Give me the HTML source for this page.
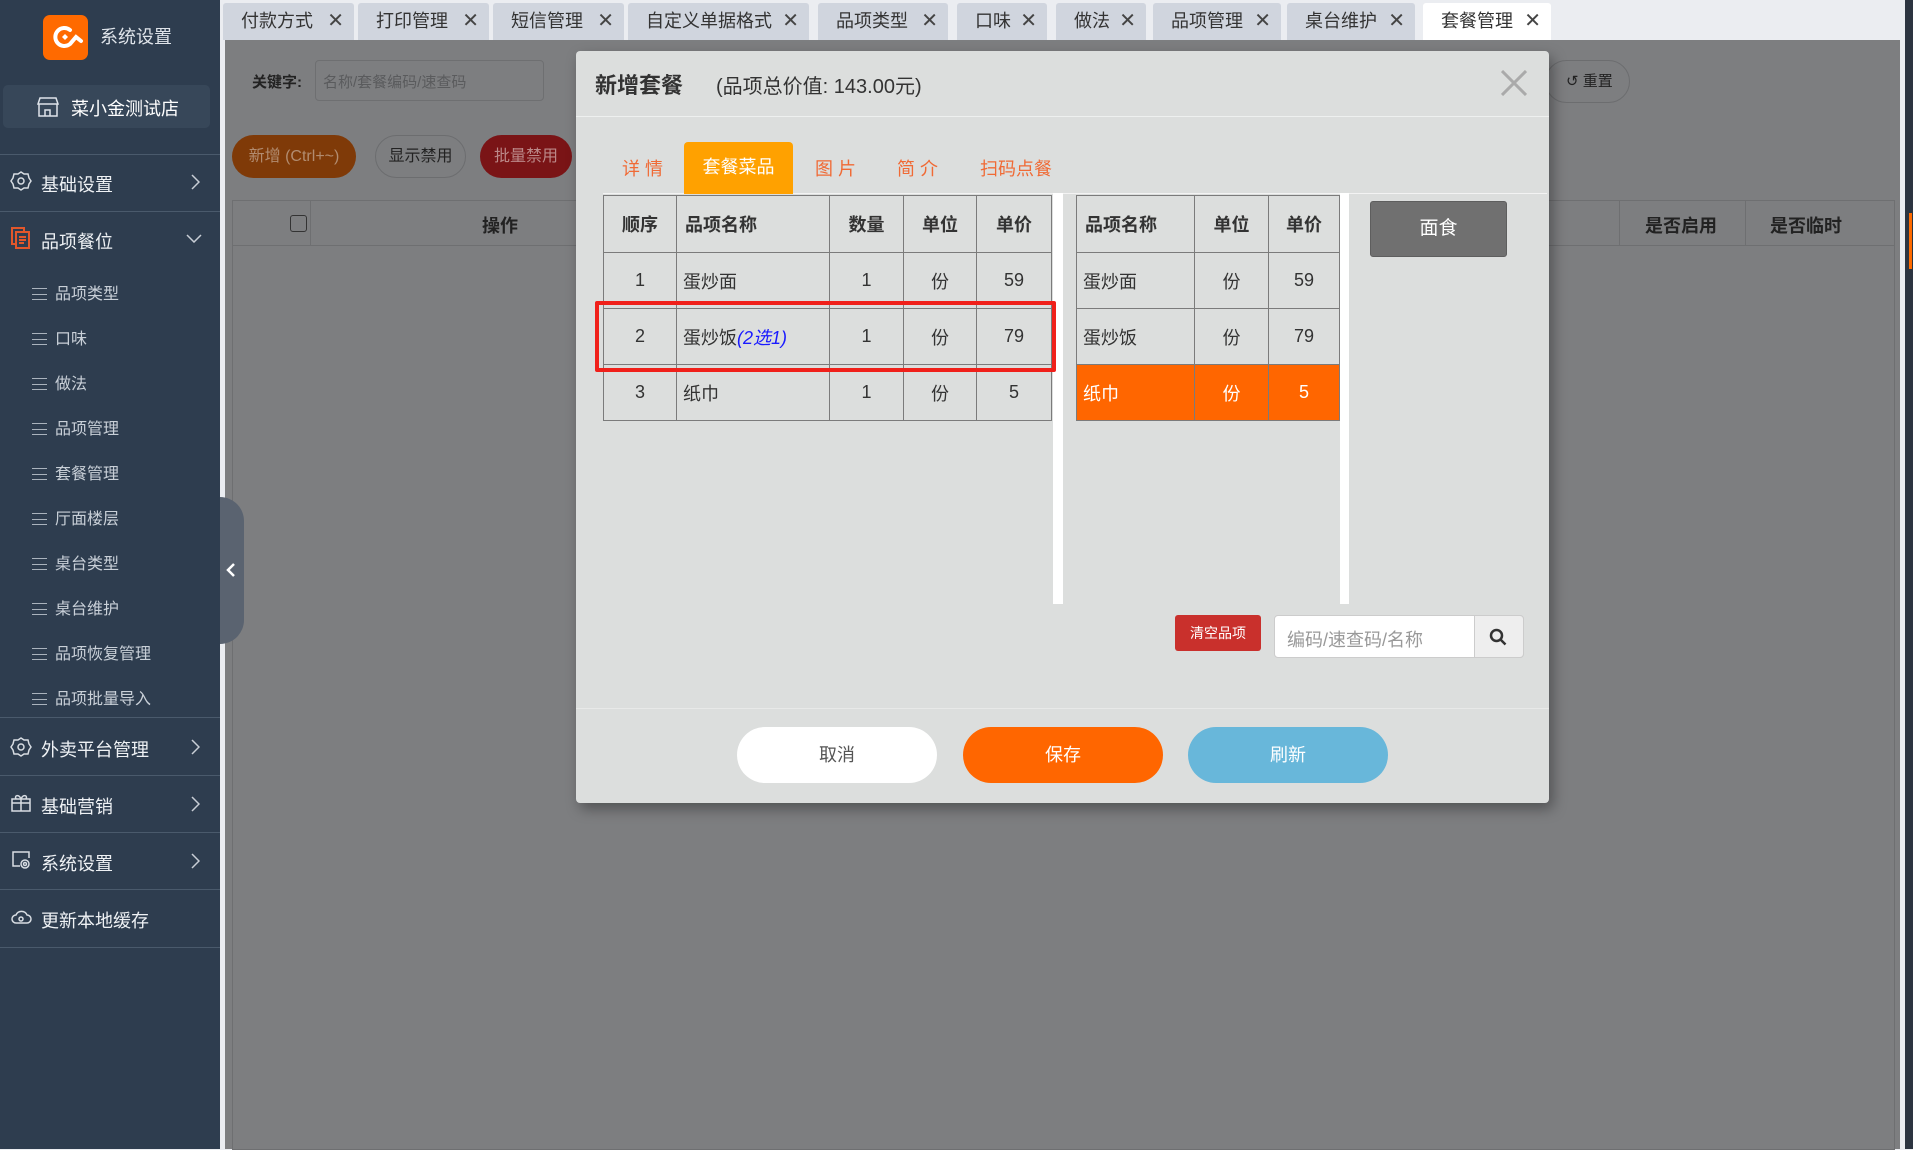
<!DOCTYPE html>
<html><head><meta charset="utf-8"><style>
*{margin:0;padding:0;box-sizing:border-box}
body{width:1913px;height:1149px;overflow:hidden;position:relative;background:#ebedf1;font-family:"Liberation Sans","Noto Sans CJK SC",sans-serif;}
.a{position:absolute}
.sb{left:0;top:0;width:220px;height:1149px;background:#2e3d4f;color:#e8ecf0}
.sep{position:absolute;left:0;width:220px;height:1px;background:#4a5a6c}
.mi{position:absolute;left:0;width:220px;font-size:18px;color:#eef1f4}
.mi .ic{position:absolute;left:10px;top:-2px;width:22px;height:22px}
.mi .t{position:absolute;left:41px;top:-1px}
.mi .ar{position:absolute;left:190px;top:2px;width:10px;height:16px}
.sub{position:absolute;left:32px;font-size:16px;color:#c9d0d8}
.sub b{display:inline-block;width:15px;height:12px;border-top:1px solid #aab3bd;border-bottom:1px solid #aab3bd;position:relative;margin-right:8px;top:1px}
.sub b:after{content:"";position:absolute;left:0;right:0;top:5px;border-top:1px solid #aab3bd}
.tab{position:absolute;top:3px;height:37px;background:#d0d5de;border-radius:3px 3px 0 0;font-size:18px;color:#333;padding-left:18px;line-height:36px}
.tab i{font-style:normal;position:absolute;right:10px;top:0;font-size:20px;color:#444}
.ov{left:225px;top:40px;width:1675px;height:1109px;background:#7d7e80}
table{border-collapse:collapse}
td{border:1px solid #7b7b7b;font-size:18px;color:#333;text-align:center;height:56px}
.lt td:nth-child(2){text-align:left;padding-left:6px}
.rt td:first-child{text-align:left;padding-left:6px}
th{border:1px solid #7b7b7b;font-size:18px;color:#333;height:57px;font-weight:bold}
.btn{position:absolute;top:727px;width:200px;height:56px;border-radius:28px;text-align:center;line-height:56px;font-size:18px}
</style></head><body>
<div class="a sb">
 <div class="a" style="left:43px;top:15px;width:45px;height:45px;background:#ff6a00;border-radius:7px">
  <svg width="45" height="45" viewBox="0 0 45 45"><path d="M27 15 A9 9 0 1 0 27 29 L33 22 L38 26" fill="none" stroke="#fff" stroke-width="4" stroke-linecap="round"/><path d="M19 22 l3-3 3 3-3 3z" fill="#fff"/></svg>
 </div>
 <div class="a" style="left:100px;top:23px;font-size:18px;color:#dfe4ea">系统设置</div>
 <div class="a" style="left:3px;top:85px;width:207px;height:43px;background:#374759;border-radius:5px"></div>
 <svg class="a" style="left:37px;top:96px" width="22" height="22" viewBox="0 0 22 22" fill="none" stroke="#dfe4ea" stroke-width="1.5"><path d="M3 2h16l2 6H1z M2 8v12h18V8 M8 20v-6h5v6"/></svg>
 <div class="a" style="left:71px;top:95px;font-size:18px;color:#fff">菜小金测试店</div>
 <div class="sep" style="top:154px"></div>
 <div class="mi" style="top:172px"><svg class="ic" viewBox="0 0 22 22" fill="none" stroke="#d8dde3" stroke-width="1.5"><path d="M11 2l3 2 4 0 1 4 2 3-2 3-1 4-4 0-3 2-3-2-4 0-1-4-2-3 2-3 1-4 4 0z"/><circle cx="11" cy="11" r="3"/></svg><span class="t">基础设置</span><svg class="ar" viewBox="0 0 10 16"><path d="M2 1l7 7-7 7" fill="none" stroke="#c8ced6" stroke-width="1.5"/></svg></div>
 <div class="sep" style="top:211px"></div>
 <div class="mi" style="top:229px"><svg class="ic" viewBox="0 0 22 22" fill="none" stroke="#e2572b" stroke-width="2"><rect x="2" y="1" width="12" height="16"/><rect x="6" y="5" width="13" height="16" fill="#2e3d4f"/><path d="M9 10h7M9 13h7M9 16h5"/></svg><span class="t">品项餐位</span><svg class="a" style="left:186px;top:4px" width="16" height="10" viewBox="0 0 16 10"><path d="M1 2l7 7 7-7" fill="none" stroke="#c8ced6" stroke-width="1.5"/></svg></div>
 <div class="sub" style="top:280px"><b></b>品项类型</div>
 <div class="sub" style="top:325px"><b></b>口味</div>
 <div class="sub" style="top:370px"><b></b>做法</div>
 <div class="sub" style="top:415px"><b></b>品项管理</div>
 <div class="sub" style="top:460px"><b></b>套餐管理</div>
 <div class="sub" style="top:505px"><b></b>厅面楼层</div>
 <div class="sub" style="top:550px"><b></b>桌台类型</div>
 <div class="sub" style="top:595px"><b></b>桌台维护</div>
 <div class="sub" style="top:640px"><b></b>品项恢复管理</div>
 <div class="sub" style="top:685px"><b></b>品项批量导入</div>
 <div class="sep" style="top:717px"></div>
 <div class="mi" style="top:737px"><svg class="ic" viewBox="0 0 22 22" fill="none" stroke="#d8dde3" stroke-width="1.5"><path d="M11 3l3 2 4 0 1 4 2 3-2 3-1 4-4 0-3 2-3-2-4 0-1-4-2-3 2-3 1-4 4 0z"/><circle cx="11" cy="12" r="3"/></svg><span class="t">外卖平台管理</span><svg class="ar" viewBox="0 0 10 16"><path d="M2 1l7 7-7 7" fill="none" stroke="#c8ced6" stroke-width="1.5"/></svg></div>
 <div class="sep" style="top:775px"></div>
 <div class="mi" style="top:794px"><svg class="ic" viewBox="0 0 22 22" fill="none" stroke="#d8dde3" stroke-width="1.5"><rect x="2" y="7" width="18" height="12"/><path d="M2 11h18M11 7v12M11 7c-2-5-7-4-5 0M11 7c2-5 7-4 5 0"/></svg><span class="t">基础营销</span><svg class="ar" viewBox="0 0 10 16"><path d="M2 1l7 7-7 7" fill="none" stroke="#c8ced6" stroke-width="1.5"/></svg></div>
 <div class="sep" style="top:832px"></div>
 <div class="mi" style="top:851px"><svg class="ic" viewBox="0 0 22 22" fill="none" stroke="#d8dde3" stroke-width="1.5"><path d="M10 17H3V3h16v6"/><circle cx="15" cy="15" r="4"/><circle cx="15" cy="15" r="1.5"/></svg><span class="t">系统设置</span><svg class="ar" viewBox="0 0 10 16"><path d="M2 1l7 7-7 7" fill="none" stroke="#c8ced6" stroke-width="1.5"/></svg></div>
 <div class="sep" style="top:889px"></div>
 <div class="mi" style="top:908px"><svg class="ic" viewBox="0 0 22 22" fill="none" stroke="#d8dde3" stroke-width="1.5"><path d="M6 17h11a4 4 0 0 0 0-8 6 6 0 0 0-11 0 4 4 0 0 0 0 8z"/><circle cx="11" cy="13" r="2"/></svg><span class="t">更新本地缓存</span></div>
 <div class="sep" style="top:947px"></div>
</div>
<div class="tab" style="left:223px;width:131px">付款方式<i>✕</i></div>
<div class="tab" style="left:358px;width:131px">打印管理<i>✕</i></div>
<div class="tab" style="left:493px;width:131px">短信管理<i>✕</i></div>
<div class="tab" style="left:628px;width:181px">自定义单据格式<i>✕</i></div>
<div class="tab" style="left:818px;width:130px">品项类型<i>✕</i></div>
<div class="tab" style="left:957px;width:90px">口味<i>✕</i></div>
<div class="tab" style="left:1056px;width:90px">做法<i>✕</i></div>
<div class="tab" style="left:1153px;width:128px">品项管理<i>✕</i></div>
<div class="tab" style="left:1287px;width:128px">桌台维护<i>✕</i></div>
<div class="tab" style="left:1423px;width:128px;background:#fff">套餐管理<i>✕</i></div>
<div class="a" style="left:1905px;top:0;width:8px;height:1149px;background:#2c3440"></div>
<div class="a" style="left:1909px;top:213px;width:3px;height:56px;background:#ff6a00"></div>
<div class="a ov">
 <div class="a" style="left:27px;top:31px;font-size:15px;font-weight:bold;color:#222">关键字:</div>
 <div class="a" style="left:90px;top:20px;width:229px;height:41px;border:1px solid #6e6f71;border-radius:4px;font-size:15px;color:#5a5b5d;padding:10px 7px">名称/套餐编码/速查码</div>
 <div class="a" style="left:7px;top:95px;width:124px;height:43px;border-radius:22px;background:#7f3a08;color:#b28c70;font-size:16px;text-align:center;line-height:43px">新增 (Ctrl+~)</div>
 <div class="a" style="left:150px;top:95px;width:91px;height:43px;border-radius:22px;border:1px solid #6c6d6f;color:#222;font-size:16px;text-align:center;line-height:41px">显示禁用</div>
 <div class="a" style="left:255px;top:95px;width:92px;height:43px;border-radius:22px;background:#7a1416;color:#b88;font-size:16px;text-align:center;line-height:43px">批量禁用</div>
 <div class="a" style="left:1320px;top:20px;width:85px;height:43px;border-radius:22px;border:1px solid #6c6d6f;color:#222;font-size:15px;line-height:41px;padding-left:20px">↺ 重置</div>
 <div class="a" style="left:7px;top:160px;width:1663px;height:950px;border:1px solid #6e6f71"></div>
 <div class="a" style="left:7px;top:205px;width:1663px;height:1px;background:#6e6f71"></div>
 <div class="a" style="left:85px;top:160px;width:1px;height:45px;background:#6e6f71"></div>
 <div class="a" style="left:1394px;top:160px;width:1px;height:45px;background:#6e6f71"></div>
 <div class="a" style="left:1520px;top:160px;width:1px;height:45px;background:#6e6f71"></div>
 <div class="a" style="left:65px;top:175px;width:17px;height:17px;border:1.5px solid #333;border-radius:3px"></div>
 <div class="a" style="left:257px;top:172px;font-size:18px;font-weight:bold;color:#222">操作</div>
 <div class="a" style="left:1420px;top:172px;font-size:18px;font-weight:bold;color:#222">是否启用</div>
 <div class="a" style="left:1545px;top:172px;font-size:18px;font-weight:bold;color:#222">是否临时</div>
</div>
<div class="a" style="left:220px;top:497px;width:24px;height:147px;background:#5a6370;border-radius:0 30px 30px 0"></div>
<svg class="a" style="left:226px;top:562px" width="10" height="16" viewBox="0 0 10 16"><path d="M8 2L2 8l6 6" fill="none" stroke="#fff" stroke-width="2.5"/></svg>
<div class="a" style="left:576px;top:51px;width:973px;height:752px;background:#dcdedd;border-radius:4px;box-shadow:4px 6px 14px rgba(0,0,0,.35)">
 <div class="a" style="left:19px;top:17px;font-size:22px;font-weight:bold;color:#333">新增套餐</div>
 <div class="a" style="left:140px;top:19px;font-size:20px;color:#333">(品项总价值: 143.00元)</div>
 <svg class="a" style="left:925px;top:19px" width="26" height="26"><path d="M1 1L25 25M25 1L1 25" stroke="#aaa" stroke-width="3"/></svg>
 <div class="a" style="left:0;top:65px;width:973px;height:1px;background:#eef0ef"></div>
 <div class="a" style="left:27px;top:142px;width:944px;height:1px;background:#f3f3f3"></div>
 <div class="a" style="left:46px;top:104px;font-size:18px;color:#f06a35;letter-spacing:5px">详情</div>
 <div class="a" style="left:108px;top:91px;width:109px;height:52px;background:#ffa100;border-radius:4px 4px 0 0;color:#fff;font-size:18px;text-align:center;line-height:50px">套餐菜品</div>
 <div class="a" style="left:239px;top:104px;font-size:18px;color:#f06a35;letter-spacing:5px">图片</div>
 <div class="a" style="left:321px;top:104px;font-size:18px;color:#f06a35;letter-spacing:5px">简介</div>
 <div class="a" style="left:404px;top:104px;font-size:18px;color:#f06a35">扫码点餐</div>
 <div class="a" style="left:477px;top:142px;width:10px;height:411px;background:#fff"></div>
 <div class="a" style="left:764px;top:142px;width:9px;height:411px;background:#fff"></div>
 <table class="a lt" style="left:27px;top:144px;width:449px">
  <tr><th style="width:73px">顺序</th><th style="width:153px;text-align:left;padding-left:8px">品项名称</th><th style="width:74px">数量</th><th style="width:73px">单位</th><th>单价</th></tr>
  <tr><td>1</td><td>蛋炒面</td><td>1</td><td>份</td><td>59</td></tr>
  <tr><td>2</td><td>蛋炒饭<i style="color:#1a1aff">(2选1)</i></td><td>1</td><td>份</td><td>79</td></tr>
  <tr><td>3</td><td>纸巾</td><td>1</td><td>份</td><td>5</td></tr>
 </table>
 <div class="a" style="left:19px;top:250px;width:461px;height:71px;border:4px solid #f0201a;border-radius:2px"></div>
 <table class="a rt" style="left:500px;top:144px;width:264px">
  <tr><th style="width:118px;text-align:left;padding-left:8px">品项名称</th><th style="width:74px">单位</th><th>单价</th></tr>
  <tr><td>蛋炒面</td><td>份</td><td>59</td></tr>
  <tr><td>蛋炒饭</td><td>份</td><td>79</td></tr>
  <tr style="background:#ff6600"><td style="color:#fff">纸巾</td><td style="color:#fff">份</td><td style="color:#fff">5</td></tr>
 </table>
 <div class="a" style="left:794px;top:150px;width:137px;height:56px;background:#707070;border:1px solid #5e5e5e;border-radius:3px;color:#fff;font-size:19px;text-align:center;line-height:54px">面食</div>
 <div class="a" style="left:599px;top:564px;width:86px;height:36px;background:#c9302c;border-radius:3px;color:#fff;font-size:14px;text-align:center;line-height:36px">清空品项</div>
 <div class="a" style="left:698px;top:564px;width:250px;height:43px;background:#fff;border:1px solid #ccc;border-radius:4px"></div>
 <div class="a" style="left:711px;top:575px;font-size:18px;color:#999">编码/速查码/名称</div>
 <div class="a" style="left:898px;top:564px;width:50px;height:43px;background:#eee;border:1px solid #ccc;border-radius:0 4px 4px 0"></div>
 <svg class="a" style="left:913px;top:577px" width="18" height="18" fill="none" stroke="#333" stroke-width="2.5"><circle cx="7.5" cy="7.5" r="5.5"/><path d="M11.5 11.5l5 5"/></svg>
 <div class="a" style="left:0;top:657px;width:973px;height:1px;background:#e8e9e8"></div>
</div>
<div class="btn" style="left:737px;background:#fff;color:#555">取消</div>
<div class="btn" style="left:963px;background:#ff6600;color:#fff">保存</div>
<div class="btn" style="left:1188px;background:#68b7da;color:#fff">刷新</div>
</body></html>
